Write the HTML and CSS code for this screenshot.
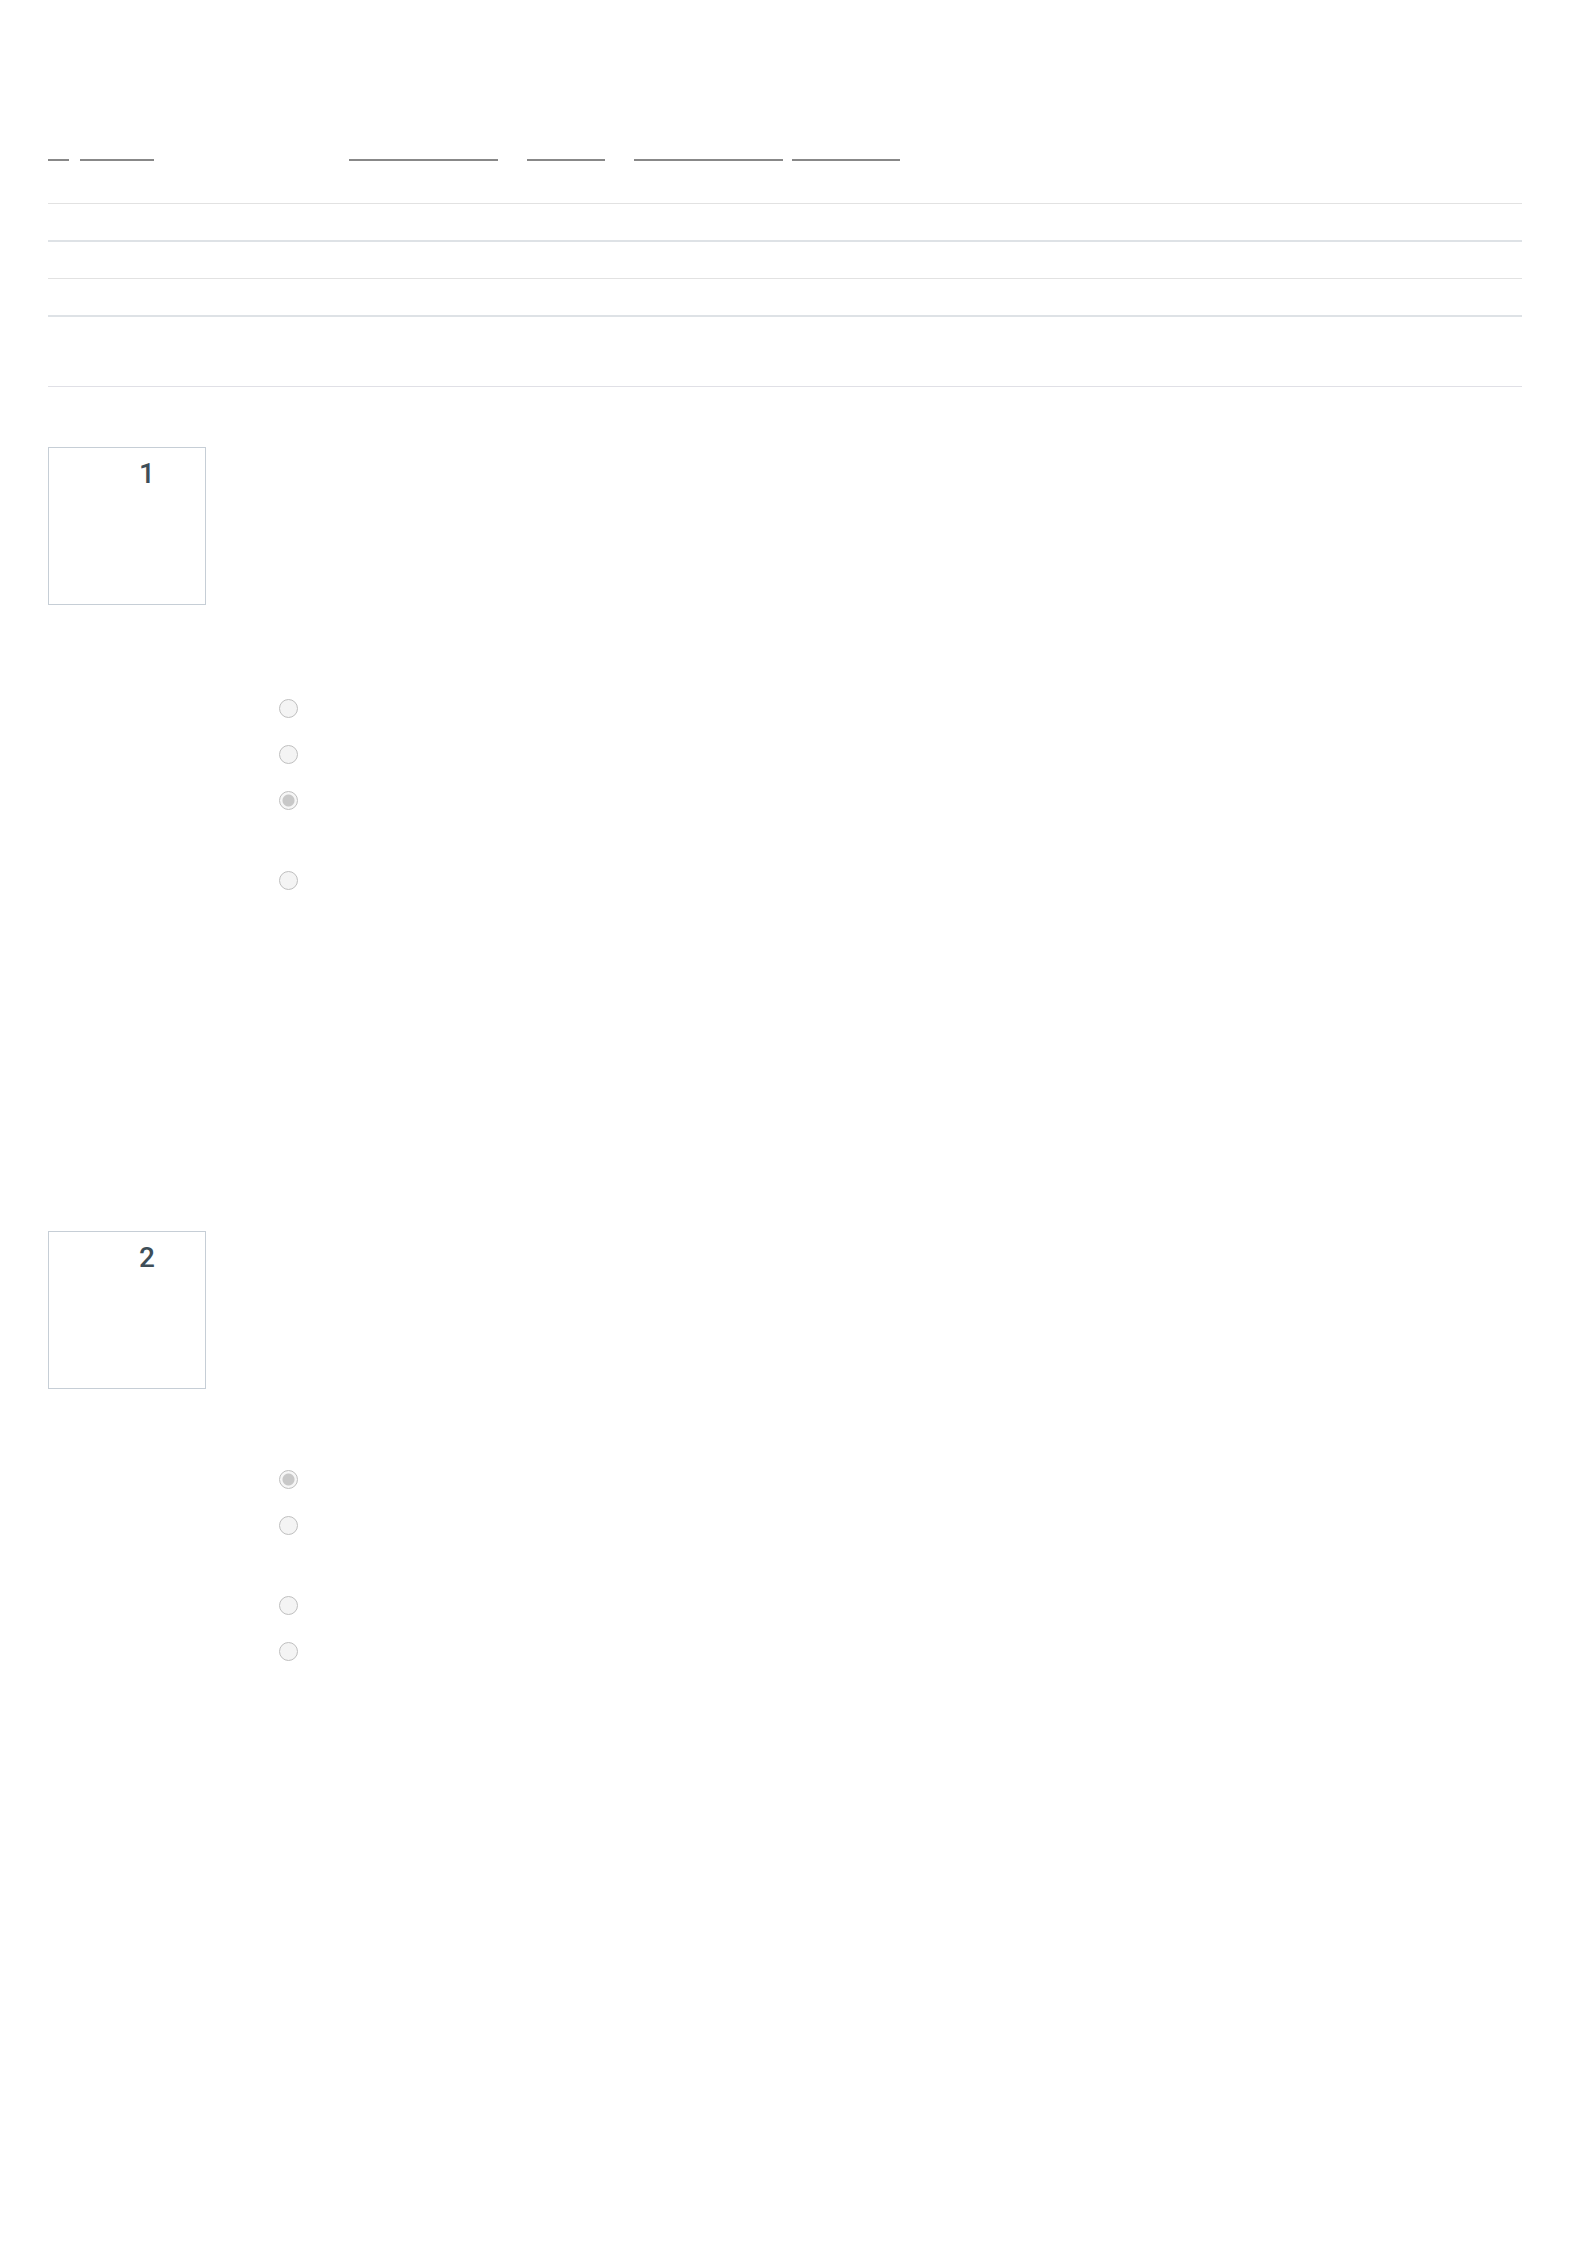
FILE: index.html
```html
<!DOCTYPE html>
<html lang="en">
<head>
    <meta charset="UTF-8">
    <meta name="viewport" content="width=device-width, initial-scale=1.0">
    <title>Quiz review</title>
    <link rel="stylesheet" href="styles.css">
</head>
<body>
<div class="page">

    <nav class="crumbs">
        <span class="crumb c1"></span>
        <span class="crumb c2"></span>
        <span class="crumb c3"></span>
        <span class="crumb c4"></span>
        <span class="crumb c5"></span>
        <span class="crumb c6"></span>
    </nav>

    <div class="summary">
        <div class="srow thick"></div>
        <div class="srow"></div>
        <div class="srow thick"></div>
        <div class="srow tall"></div>
    </div>

    <!-- Pertanyaan 1 -->
    <div class="que first">
        <div class="info"><span class="qno">1</span></div>
        <div class="answers gap1">
            <div class="ans"><input type="radio" name="q1"></div>
            <div class="ans"><input type="radio" name="q1"></div>
            <div class="ans tall"><input type="radio" name="q1" checked></div>
            <div class="ans"><input type="radio" name="q1"></div>
        </div>
    </div>

    <!-- Pertanyaan 2 -->
    <div class="que second">
        <div class="info"><span class="qno">2</span></div>
        <div class="answers gap2">
            <div class="ans"><input type="radio" name="q2" checked></div>
            <div class="ans tall"><input type="radio" name="q2"></div>
            <div class="ans"><input type="radio" name="q2"></div>
            <div class="ans"><input type="radio" name="q2"></div>
        </div>
    </div>

</div>
</body>
</html>
```

FILE: styles.css
```css
body { margin: 0; background-color: #fff; font-family: "Liberation Sans", Arial, sans-serif; }
.page { padding: 0 48px; height: 2268px; box-sizing: border-box; }

/* breadcrumb, teksnya tidak terlihat, hanya garis bawah */
.crumbs { display: flex; align-items: flex-end; height: 161px; }
.crumb { display: block; height: 0; border-bottom: 2px solid #888; }
.c1 { width: 21px; }
.c2 { width: 74px; margin-left: 11px; }
.c3 { width: 149px; margin-left: 195px; }
.c4 { width: 78px; margin-left: 29px; }
.c5 { width: 149px; margin-left: 29px; }
.c6 { width: 108px; margin-left: 9px; }

/* tabel ringkasan */
.summary { margin-top: 42px; border-top: 1px solid #e2e2e2; }
.srow { height: 36px; border-bottom: 1px solid #e2e2e2; }
.srow.thick { border-bottom: 2px solid #dee2e6; }
.srow.tall { height: 69px; border-bottom-color: #e0e0e6; }

/* pertanyaan */
.que.first { margin-top: 60px; }
.que.second { margin-top: 328px; }
.info {
    width: 158px;
    height: 158px;
    box-sizing: border-box;
    border: 1px solid #c6ced6;
    padding: 10px 0 0 90px;
}
.qno { font-family: Roboto, "Liberation Sans", sans-serif; font-weight: 500; font-size: 28px; line-height: 32px; color: #3e4e58; }

.answers { padding-left: 231px; }
.answers.gap1 { margin-top: 80px; }
.answers.gap2 { margin-top: 67px; }
.ans { height: 46px; box-sizing: border-box; padding-top: 14px; }
.ans.tall { height: 80px; }

input[type="radio"] {
    appearance: none;
    -webkit-appearance: none;
    display: block;
    margin: 0;
    width: 19px;
    height: 19px;
    border: 1px solid #bfbfbf;
    border-radius: 50%;
    background-color: #f4f4f4;
}
input[type="radio"]:checked {
    background: radial-gradient(circle, #c8c8c8 0, #c8c8c8 5.5px, #f6f6f6 6.5px);
}
```
